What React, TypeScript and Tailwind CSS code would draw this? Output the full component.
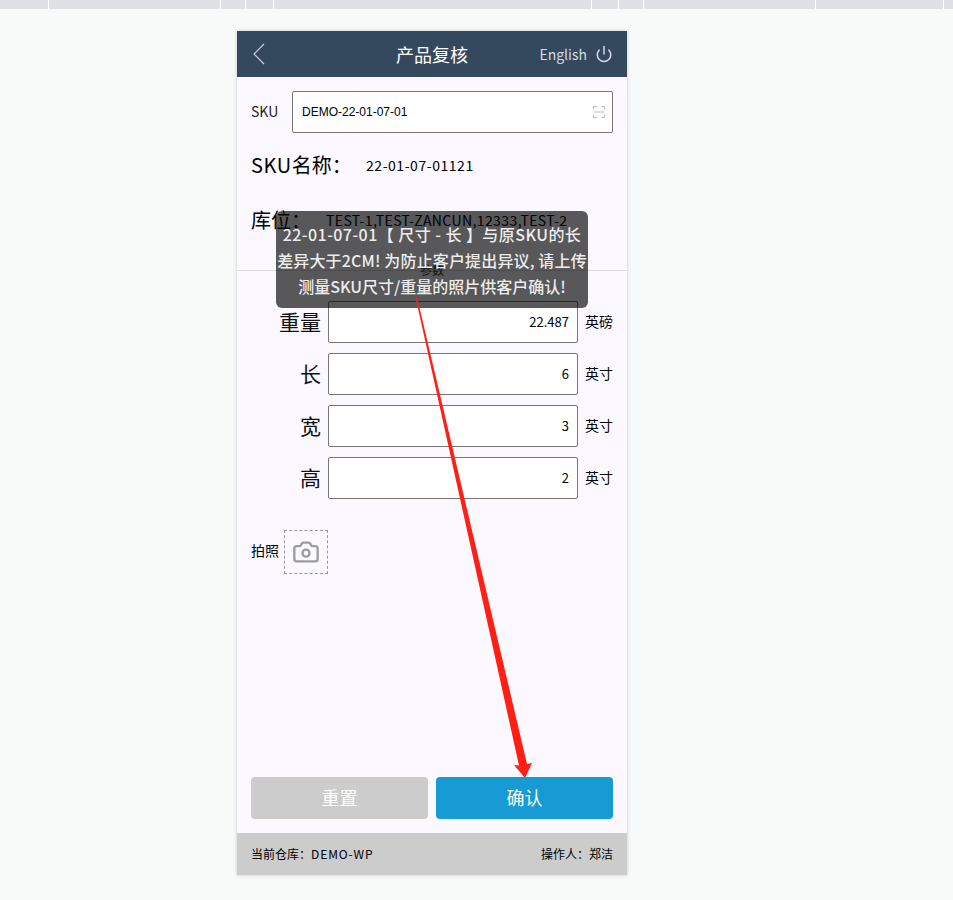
import { Camera, Power } from "lucide-react";

const cjk = "font-['Noto_Sans_CJK_SC','Liberation_Sans',sans-serif]";
const ticks = [48, 220, 245, 273, 591, 618, 643, 815, 943];

const measures = [
  { label: "重量", value: "22.487", unit: "英磅" },
  { label: "长", value: "6", unit: "英寸" },
  { label: "宽", value: "3", unit: "英寸" },
  { label: "高", value: "2", unit: "英寸" },
];

function TopStrip() {
  return (
    <div className="flex h-[9px] bg-[#dfe1e6]">
      {ticks.map((x, i) => (
        <div
          key={x}
          className="h-full w-px bg-white"
          style={{ marginLeft: i === 0 ? x : x - ticks[i - 1] - 1 }}
        />
      ))}
    </div>
  );
}

function Header() {
  return (
    <div className="flex h-[46px] items-center justify-between bg-[#34495e] pl-[16px] pr-[14px]">
      <svg width="12" height="22" viewBox="0 0 12 22" fill="none" stroke="#c3ccd4" strokeWidth="1.2">
        <path d="M11 1 1 11l10 10" />
      </svg>
      <div className="absolute left-0 right-0 text-center text-[18px] text-white">产品复核</div>
      <div className="relative flex items-center gap-[8px] text-[14px] text-[#d5dbe0]">
        <span>English</span>
        <Power size={18} strokeWidth={2} />
      </div>
    </div>
  );
}

function SkuRow() {
  return (
    <div className="flex items-center pl-[14px] pr-[14px] pt-[14px]">
      <div className="w-[41px] pb-[2px] text-[14px] leading-[40px] text-[#222]">SKU</div>
      <div className="flex h-[42px] flex-1 items-center justify-between rounded-[2px] border border-[#777] bg-white pl-[9px] pr-[7px]">
        <span className="font-['Liberation_Sans',sans-serif] text-[12px] text-black">DEMO-22-01-07-01</span>
        <svg width="12" height="12" viewBox="0 0 12 12" fill="none" stroke="#b4b8bc" strokeWidth="1">
          <path d="M.5 3.5v-3h3M8.5.5h3v3M.5 6h11M.5 8.5v3h3M8.5 11.5h3v-3" />
        </svg>
      </div>
    </div>
  );
}

function MeasureRow({ label, value, unit }: { label: string; value: string; unit: string }) {
  return (
    <div className="flex h-[42px] items-center">
      <div className="w-[84px] text-right text-[21px] text-[#111]">{label}</div>
      <div className="ml-[7px] flex h-[42px] w-[250px] items-center justify-end rounded-[2px] border border-[#777] bg-white pr-[8px] text-[13px] text-black">
        {value}
      </div>
      <div className="ml-[7px] pb-[2px] text-[14px] text-black">{unit}</div>
    </div>
  );
}

function Toast() {
  return (
    <div className="absolute left-[39px] top-[180px] flex h-[97px] w-[312px] flex-col justify-center rounded-[6px] bg-black/65 text-center text-[16px] font-medium leading-[26px] whitespace-nowrap text-[#ececec]">
      <div className="tracking-[0.45px]">22-01-07-01【 尺寸 - 长 】与原SKU的长</div>
      <div className="tracking-[0.15px]">差异大于2CM! 为防止客户提出异议, 请上传</div>
      <div>测量SKU尺寸/重量的照片供客户确认!</div>
    </div>
  );
}

function RedArrow() {
  return (
    <svg className="absolute left-0 top-0" width="390" height="844" viewBox="0 0 390 844" fill="none">
      <polygon points="178.5,266 180,266 290,733 295,732 288,747 277,734 282,734.5" fill="#ff2015" />
    </svg>
  );
}

export default function App() {
  return (
    <div className={`h-[900px] overflow-hidden bg-[#f7faf9] ${cjk}`}>
      <TopStrip />
      <div className="relative ml-[237px] mt-[22px] flex h-[844px] w-[390px] flex-col bg-[#fbf9ff] shadow-[0_0_4px_rgba(0,0,0,0.2)]">
        <Header />
        <SkuRow />
        <div className="mt-[12px] flex h-[40px] items-center pl-[14px] text-black">
          <span className="w-[115px] text-[20px]">
            <span className="tracking-[0.6px]">SKU</span>名称：
          </span>
          <span className="text-[14px] tracking-[0.55px]">22-01-07-01121</span>
        </div>
        <div className="mt-[15px] flex h-[40px] items-center pl-[14px] text-black">
          <span className="w-[75px] text-[20px]">库位：</span>
          <span className="text-[14px] tracking-[0.4px]">TEST-1,TEST-ZANCUN,12333,TEST-2</span>
        </div>
        <div className="relative mt-[30px] h-px bg-[#dddde0]">
          <span className="absolute left-0 right-0 top-[-9px] text-center text-[12px] leading-[18px] text-[#333]">参数</span>
        </div>
        <div className="mt-[30px] flex flex-col gap-[10px]">
          {measures.map((m) => (
            <MeasureRow key={m.label} {...m} />
          ))}
        </div>
        <div className="mt-[31px] flex items-center pl-[14px]">
          <span className="pb-[3px] text-[14px] text-black">拍照</span>
          <div className="ml-[5px] flex h-[44px] w-[44px] items-center justify-center border border-dashed border-[#999]">
            <Camera size={28} strokeWidth={2} className="text-[#9a9ea3]" />
          </div>
        </div>
        <div className="flex-1" />
        <div className="flex gap-[8px] px-[14px] pb-[14px]">
          <button className="h-[42px] flex-1 rounded-[4px] bg-[#cccccc] pb-[2px] text-[18px] text-white">重置</button>
          <button className="h-[42px] flex-1 rounded-[4px] bg-[#169bd5] pb-[2px] text-[18px] text-white">确认</button>
        </div>
        <div className="flex h-[42px] items-center justify-between bg-[#cccccc] px-[14px] text-[12px] text-black">
          <span>
            当前仓库：<span className="tracking-[0.9px]">DEMO-WP</span>
          </span>
          <span>操作人：郑洁</span>
        </div>
        <Toast />
        <RedArrow />
      </div>
    </div>
  );
}
